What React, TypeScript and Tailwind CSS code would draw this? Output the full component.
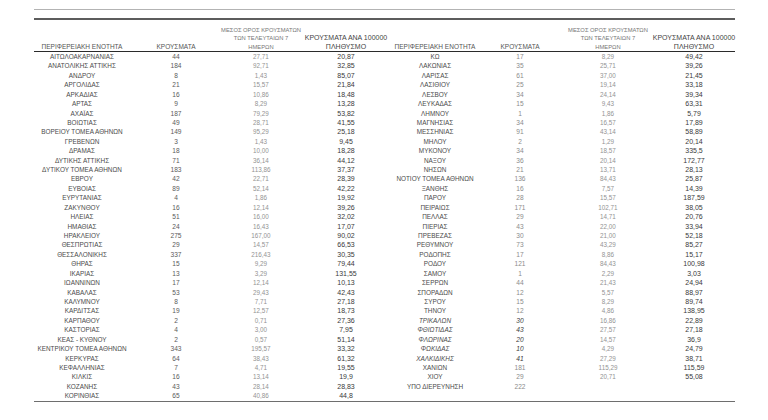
type Row = [string, string, string, string, boolean?];

const leftRows: Row[] = [
  ["ΑΙΤΩΛΟΑΚΑΡΝΑΝΙΑΣ", "44", "27,71", "20,87"],
  ["ΑΝΑΤΟΛΙΚΗΣ ΑΤΤΙΚΗΣ", "184", "92,71", "32,85"],
  ["ΑΝΔΡΟΥ", "8", "1,43", "85,07"],
  ["ΑΡΓΟΛΙΔΑΣ", "21", "15,57", "21,84"],
  ["ΑΡΚΑΔΙΑΣ", "16", "10,86", "18,48"],
  ["ΑΡΤΑΣ", "9", "8,29", "13,28"],
  ["ΑΧΑΪΑΣ", "187", "79,29", "53,82"],
  ["ΒΟΙΩΤΙΑΣ", "49", "28,71", "41,55"],
  ["ΒΟΡΕΙΟΥ ΤΟΜΕΑ ΑΘΗΝΩΝ", "149", "95,29", "25,18"],
  ["ΓΡΕΒΕΝΩΝ", "3", "1,43", "9,45"],
  ["ΔΡΑΜΑΣ", "18", "10,00", "18,28"],
  ["ΔΥΤΙΚΗΣ ΑΤΤΙΚΗΣ", "71", "36,14", "44,12"],
  ["ΔΥΤΙΚΟΥ ΤΟΜΕΑ ΑΘΗΝΩΝ", "183", "113,86", "37,37"],
  ["ΕΒΡΟΥ", "42", "22,71", "28,39"],
  ["ΕΥΒΟΙΑΣ", "89", "52,14", "42,22"],
  ["ΕΥΡΥΤΑΝΙΑΣ", "4", "1,86", "19,92"],
  ["ΖΑΚΥΝΘΟΥ", "16", "12,14", "39,26"],
  ["ΗΛΕΙΑΣ", "51", "16,00", "32,02"],
  ["ΗΜΑΘΙΑΣ", "24", "16,43", "17,07"],
  ["ΗΡΑΚΛΕΙΟΥ", "275", "167,00", "90,02"],
  ["ΘΕΣΠΡΩΤΙΑΣ", "29", "14,57", "66,53"],
  ["ΘΕΣΣΑΛΟΝΙΚΗΣ", "337", "216,43", "30,35"],
  ["ΘΗΡΑΣ", "15", "9,29", "79,44"],
  ["ΙΚΑΡΙΑΣ", "13", "3,29", "131,55"],
  ["ΙΩΑΝΝΙΝΩΝ", "17", "12,14", "10,13"],
  ["ΚΑΒΑΛΑΣ", "53", "29,43", "42,43"],
  ["ΚΑΛΥΜΝΟΥ", "8", "7,71", "27,18"],
  ["ΚΑΡΔΙΤΣΑΣ", "19", "12,57", "18,73"],
  ["ΚΑΡΠΑΘΟΥ", "2", "0,71", "27,36"],
  ["ΚΑΣΤΟΡΙΑΣ", "4", "3,00", "7,95"],
  ["ΚΕΑΣ - ΚΥΘΝΟΥ", "2", "0,57", "51,14"],
  ["ΚΕΝΤΡΙΚΟΥ ΤΟΜΕΑ ΑΘΗΝΩΝ", "343", "195,57", "33,32"],
  ["ΚΕΡΚΥΡΑΣ", "64", "38,43", "61,32"],
  ["ΚΕΦΑΛΛΗΝΙΑΣ", "7", "4,71", "19,55"],
  ["ΚΙΛΚΙΣ", "16", "13,14", "19,9"],
  ["ΚΟΖΑΝΗΣ", "43", "28,14", "28,83"],
  ["ΚΟΡΙΝΘΙΑΣ", "65", "40,86", "44,8"],
];

const rightRows: Row[] = [
  ["ΚΩ", "17", "8,29", "49,42"],
  ["ΛΑΚΩΝΙΑΣ", "35", "25,71", "39,26"],
  ["ΛΑΡΙΣΑΣ", "61", "37,00", "21,45"],
  ["ΛΑΣΙΘΙΟΥ", "25", "19,14", "33,18"],
  ["ΛΕΣΒΟΥ", "34", "24,14", "39,34"],
  ["ΛΕΥΚΑΔΑΣ", "15", "9,43", "63,31"],
  ["ΛΗΜΝΟΥ", "1", "1,86", "5,79"],
  ["ΜΑΓΝΗΣΙΑΣ", "34", "16,57", "17,89"],
  ["ΜΕΣΣΗΝΙΑΣ", "91", "43,14", "58,89"],
  ["ΜΗΛΟΥ", "2", "1,29", "20,14"],
  ["ΜΥΚΟΝΟΥ", "34", "18,57", "335,5"],
  ["ΝΑΞΟΥ", "36", "20,14", "172,77"],
  ["ΝΗΣΩΝ", "21", "13,71", "28,13"],
  ["ΝΟΤΙΟΥ ΤΟΜΕΑ ΑΘΗΝΩΝ", "136", "84,43", "25,87"],
  ["ΞΑΝΘΗΣ", "16", "7,57", "14,39"],
  ["ΠΑΡΟΥ", "28", "15,57", "187,59"],
  ["ΠΕΙΡΑΙΩΣ", "171", "102,71", "38,05"],
  ["ΠΕΛΛΑΣ", "29", "14,71", "20,76"],
  ["ΠΙΕΡΙΑΣ", "43", "22,00", "33,94"],
  ["ΠΡΕΒΕΖΑΣ", "30", "21,00", "52,18"],
  ["ΡΕΘΥΜΝΟΥ", "73", "43,29", "85,27"],
  ["ΡΟΔΟΠΗΣ", "17", "8,86", "15,17"],
  ["ΡΟΔΟΥ", "121", "84,43", "100,98"],
  ["ΣΑΜΟΥ", "1", "2,29", "3,03"],
  ["ΣΕΡΡΩΝ", "44", "21,43", "24,94"],
  ["ΣΠΟΡΑΔΩΝ", "12", "5,57", "88,97"],
  ["ΣΥΡΟΥ", "15", "8,29", "89,74"],
  ["ΤΗΝΟΥ", "12", "4,86", "138,95"],
  ["ΤΡΙΚΑΛΩΝ", "30", "16,86", "22,89", true],
  ["ΦΘΙΩΤΙΔΑΣ", "43", "27,57", "27,18", true],
  ["ΦΛΩΡΙΝΑΣ", "20", "14,57", "36,9", true],
  ["ΦΩΚΙΔΑΣ", "10", "4,29", "24,79", true],
  ["ΧΑΛΚΙΔΙΚΗΣ", "41", "27,29", "38,71", true],
  ["ΧΑΝΙΩΝ", "181", "115,29", "115,59"],
  ["ΧΙΟΥ", "29", "20,71", "55,08"],
  ["ΥΠΟ ΔΙΕΡΕΥΝΗΣΗ", "222", "", ""],
];

const leftCols = ["w-[96px]", "w-[92px]", "w-[78px]", "w-[92px]"];
const rightCols = ["w-[86px]", "w-[84px]", "w-[92px]", "w-[80px]"];

function Header({ cols }: { cols: string[] }) {
  return (
    <div className="flex h-[31px] items-end text-[#555]">
      <div className={`${cols[0]} flex justify-center whitespace-nowrap text-[6.5px] leading-[8.5px]`}>
        ΠΕΡΙΦΕΡΕΙΑΚΗ ΕΝΟΤΗΤΑ
      </div>
      <div className={`${cols[1]} flex justify-center whitespace-nowrap text-[6.5px] leading-[8.5px]`}>
        ΚΡΟΥΣΜΑΤΑ
      </div>
      <div className={`${cols[2]} flex flex-col items-center whitespace-nowrap text-[5.8px] leading-[8.5px] text-[#777]`}>
        <span>ΜΕΣΟΣ ΟΡΟΣ ΚΡΟΥΣΜΑΤΩΝ</span>
        <span>ΤΩΝ ΤΕΛΕΥΤΑΙΩΝ 7</span>
        <span>ΗΜΕΡΩΝ</span>
      </div>
      <div className={`${cols[3]} flex flex-col items-center whitespace-nowrap text-[7px] leading-[8.5px] text-[#444]`}>
        <span>ΚΡΟΥΣΜΑΤΑ ΑΝΑ 100000</span>
        <span>ΠΛΗΘΥΣΜΟ</span>
      </div>
    </div>
  );
}

function Body({ rows, cols, light }: { rows: Row[]; cols: string[]; light?: boolean }) {
  return (
    <div className="flex flex-col">
      {rows.map(([name, cases, avg, per, italic]) => (
        <div key={name} className="flex h-[9.43px] items-center leading-[9.43px]">
          <div
            className={`${cols[0]} flex justify-center whitespace-nowrap text-[6.4px] text-[#4a4a4a] ${italic ? "italic" : ""}`}
          >
            {name}
          </div>
          <div
            className={`${cols[1]} flex justify-center text-[6.6px] ${
              italic ? "italic text-[#3a3a3a]" : light ? "text-[#8c8c8c]" : "text-[#5a5a5a]"
            }`}
          >
            {cases}
          </div>
          <div className={`${cols[2]} flex justify-center text-[6.3px] text-[#939393]`}>{avg}</div>
          <div className={`${cols[3]} flex justify-center text-[7px] text-[#3a3a3a]`}>{per}</div>
        </div>
      ))}
    </div>
  );
}

export default function App() {
  return (
    <div className="h-[420px] w-[768px] bg-white pl-[34px] pt-[9px] font-['Liberation_Sans',Arial,sans-serif]">
      <div className="w-[701px]">
        <div className="h-px bg-[#b3b3b3]" />
        <div className="mt-[8px] h-[2px] bg-[#5c5c5c]" />
        <div className="flex border-b border-[#2b2b2b]">
          <Header cols={leftCols} />
          <Header cols={rightCols} />
        </div>
        <div className="flex items-start border-b-[1.5px] border-[#6e6e6e]">
          <Body rows={leftRows} cols={leftCols} />
          <Body rows={rightRows} cols={rightCols} light />
        </div>
      </div>
    </div>
  );
}
